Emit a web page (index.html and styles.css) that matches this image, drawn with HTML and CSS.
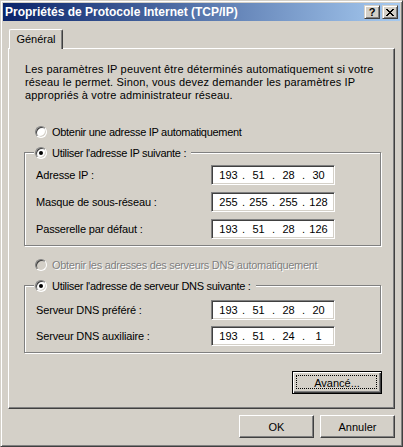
FILE: index.html
```html
<!DOCTYPE html>
<html lang="fr">
<head>
    <meta charset="UTF-8">
    <title>Propriétés de Protocole Internet (TCP/IP)</title>
    <link rel="stylesheet" href="styles.css">
</head>
<body>
    <div class="window">
        <div class="titlebar">
            <span class="title">Propriétés de Protocole Internet (TCP/IP)</span>
            <div class="caption-buttons">
                <span class="cap-btn help">?</span>
                <span class="cap-btn">
                    <svg width="8" height="7" viewBox="0 0 8 7" shape-rendering="crispEdges">
                        <path d="M0 0h2v1h-2z M6 0h2v1h-2z M1 1h2v1h-2z M5 1h2v1h-2z M2 2h4v1h-4z M3 3h2v1h-2z M2 4h4v1h-4z M1 5h2v1h-2z M5 5h2v1h-2z M0 6h2v1h-2z M6 6h2v1h-2z" fill="#000"/>
                    </svg>
                </span>
            </div>
        </div>

        <div class="dialog-body">
            <div class="tabs">
                <div class="tab">Général</div>
            </div>

            <div class="panel">
                <p class="intro">Les paramètres IP peuvent être déterminés automatiquement si votre<br>réseau le permet. Sinon, vous devez demander les paramètres IP<br>appropriés à votre administrateur réseau.</p>

                <div class="option first"><span class="radio"></span>Obtenir une adresse IP automatiquement</div>

                <fieldset class="group">
                    <legend><span class="radio checked"></span>Utiliser l'adresse IP suivante :</legend>
                    <div class="field">
                        <span class="label">Adresse IP :</span>
                        <div class="ip"><span>193</span><i>.</i><span>51</span><i>.</i><span>28</span><i>.</i><span>30</span></div>
                    </div>
                    <div class="field">
                        <span class="label">Masque de sous-réseau :</span>
                        <div class="ip"><span>255</span><i>.</i><span>255</span><i>.</i><span>255</span><i>.</i><span>128</span></div>
                    </div>
                    <div class="field">
                        <span class="label">Passerelle par défaut :</span>
                        <div class="ip"><span>193</span><i>.</i><span>51</span><i>.</i><span>28</span><i>.</i><span>126</span></div>
                    </div>
                </fieldset>

                <div class="option disabled"><span class="radio"></span>Obtenir les adresses des serveurs DNS automatiquement</div>

                <fieldset class="group dns">
                    <legend><span class="radio checked"></span>Utiliser l'adresse de serveur DNS suivante :</legend>
                    <div class="field">
                        <span class="label">Serveur DNS préféré :</span>
                        <div class="ip"><span>193</span><i>.</i><span>51</span><i>.</i><span>28</span><i>.</i><span>20</span></div>
                    </div>
                    <div class="field">
                        <span class="label">Serveur DNS auxiliaire :</span>
                        <div class="ip"><span>193</span><i>.</i><span>51</span><i>.</i><span>24</span><i>.</i><span>1</span></div>
                    </div>
                </fieldset>

                <div class="advanced-row">
                    <button class="btn default">Avancé...</button>
                </div>
            </div>

            <div class="actions">
                <button class="btn">OK</button>
                <button class="btn">Annuler</button>
            </div>
        </div>
    </div>
</body>
</html>
```

FILE: styles.css
```css
body {
    margin: 0;
    padding: 0;
    font-family: "Liberation Sans", Arial, sans-serif;
    font-size: 11px;
    color: #000;
    background-color: #d4d0c8;
}

.window {
    width: 403px;
    height: 447px;
    box-sizing: border-box;
    padding: 2px;
    background-color: #d4d0c8;
    border: 1px solid;
    border-color: #d4d0c8 #404040 #404040 #d4d0c8;
    box-shadow: inset 1px 1px 0 #fff, inset -1px -1px 0 #808080;
}

/* barre de titre */
.titlebar {
    height: 18px;
    display: flex;
    align-items: center;
    justify-content: space-between;
    padding: 0 2px;
    background: linear-gradient(to right, #0a246a, #a6caf0);
}

.title {
    color: #fff;
    font-weight: bold;
    font-size: 12px;
    line-height: 18px;
    white-space: nowrap;
}

.caption-buttons {
    display: flex;
    gap: 2px;
}

.cap-btn {
    width: 16px;
    height: 14px;
    box-sizing: border-box;
    display: flex;
    align-items: center;
    justify-content: center;
    background-color: #d4d0c8;
    border: 1px solid;
    border-color: #d4d0c8 #404040 #404040 #d4d0c8;
    box-shadow: inset 1px 1px 0 #fff, inset -1px -1px 0 #808080;
}

.cap-btn.help {
    font-weight: bold;
    font-size: 11px;
    line-height: 12px;
}

/* corps du dialogue */
.dialog-body {
    padding: 8px 5px 0 5px;
}

.tabs {
    display: flex;
    padding-left: 1px;
}

.tab {
    position: relative;
    z-index: 1;
    width: 54px;
    height: 20px;
    box-sizing: border-box;
    margin-bottom: -1px;
    text-align: center;
    line-height: 19px;
    background-color: #d4d0c8;
    border-top: 1px solid #fff;
    border-left: 1px solid #fff;
    border-right: 1px solid #404040;
    border-radius: 2px 2px 0 0;
    box-shadow: inset -1px 0 0 #808080;
}

.panel {
    height: 361px;
    box-sizing: border-box;
    padding: 0 12px 0 15px;
    border: 1px solid;
    border-color: #fff #404040 #404040 #fff;
    box-shadow: inset -1px -1px 0 #808080;
}

.intro {
    margin: 14px 0 0 1px;
    line-height: 13px;
    letter-spacing: 0.16px;
}

.option {
    display: flex;
    align-items: center;
    gap: 5px;
    height: 13px;
    padding-left: 11px;
    letter-spacing: -0.3px;
}

.option.first {
    margin-top: 23px;
}

.option.disabled {
    margin-top: 12px;
    color: #808080;
    text-shadow: 1px 1px 0 #fff;
}

.radio {
    flex: none;
    position: relative;
    width: 12px;
    height: 12px;
    box-sizing: border-box;
    border-radius: 50%;
    background-color: #fff;
    border: 1px solid;
    border-color: #808080 #fff #fff #808080;
    box-shadow: inset 1px 1px 0 #404040, inset -1px -1px 0 #d4d0c8;
}

.option.disabled .radio {
    background-color: #d4d0c8;
}

.radio.checked::after {
    content: "";
    position: absolute;
    left: 3px;
    top: 3px;
    width: 4px;
    height: 4px;
    border-radius: 50%;
    background-color: #000;
}

/* cadres de groupe */
.group {
    margin: 8px 1px 0 0;
    padding: 6px 45px 6px 9px;
    min-width: 0;
    border: 1px solid #808080;
    box-shadow: 1px 1px 0 #fff, inset 1px 1px 0 #fff;
}

.group.dns {
    padding-top: 8px;
}

.group legend {
    display: flex;
    align-items: center;
    gap: 5px;
    height: 13px;
    padding: 0 5px 0 1px;
    letter-spacing: -0.3px;
    background-color: #d4d0c8;
}

.field {
    display: flex;
    align-items: center;
    height: 20px;
}

.field + .field {
    margin-top: 7px;
}

.group.dns .field + .field {
    margin-top: 6px;
}

.label {
    width: 177px;
    padding-left: 2px;
    box-sizing: border-box;
    letter-spacing: -0.15px;
}

.ip {
    width: 124px;
    height: 20px;
    box-sizing: border-box;
    display: flex;
    align-items: center;
    padding-left: 5px;
    background-color: #fff;
    border: 1px solid;
    border-color: #808080 #fff #fff #808080;
    box-shadow: inset 1px 1px 0 #404040, inset -1px -1px 0 #d4d0c8;
}

.ip span {
    width: 23px;
    text-align: center;
}

.ip i {
    width: 7px;
    font-style: normal;
    text-align: center;
}

/* boutons */
.btn {
    position: relative;
    width: 75px;
    height: 23px;
    padding: 0;
    font-family: inherit;
    font-size: 11px;
    color: #000;
    background-color: #d4d0c8;
    border: 1px solid;
    border-color: #fff #404040 #404040 #fff;
    box-shadow: inset -1px -1px 0 #808080;
}

.btn.default {
    width: 90px;
    border-color: #000;
    box-shadow: inset 1px 1px 0 #fff, inset -1px -1px 0 #404040, inset -2px -2px 0 #808080;
}

.btn.default::after {
    content: "";
    position: absolute;
    left: 3px;
    top: 3px;
    right: 4px;
    bottom: 4px;
    border: 1px dotted #000;
}

.advanced-row {
    display: flex;
    justify-content: flex-end;
    margin-top: 18px;
}

.actions {
    display: flex;
    justify-content: flex-end;
    gap: 6px;
    margin-top: 6px;
}
```
